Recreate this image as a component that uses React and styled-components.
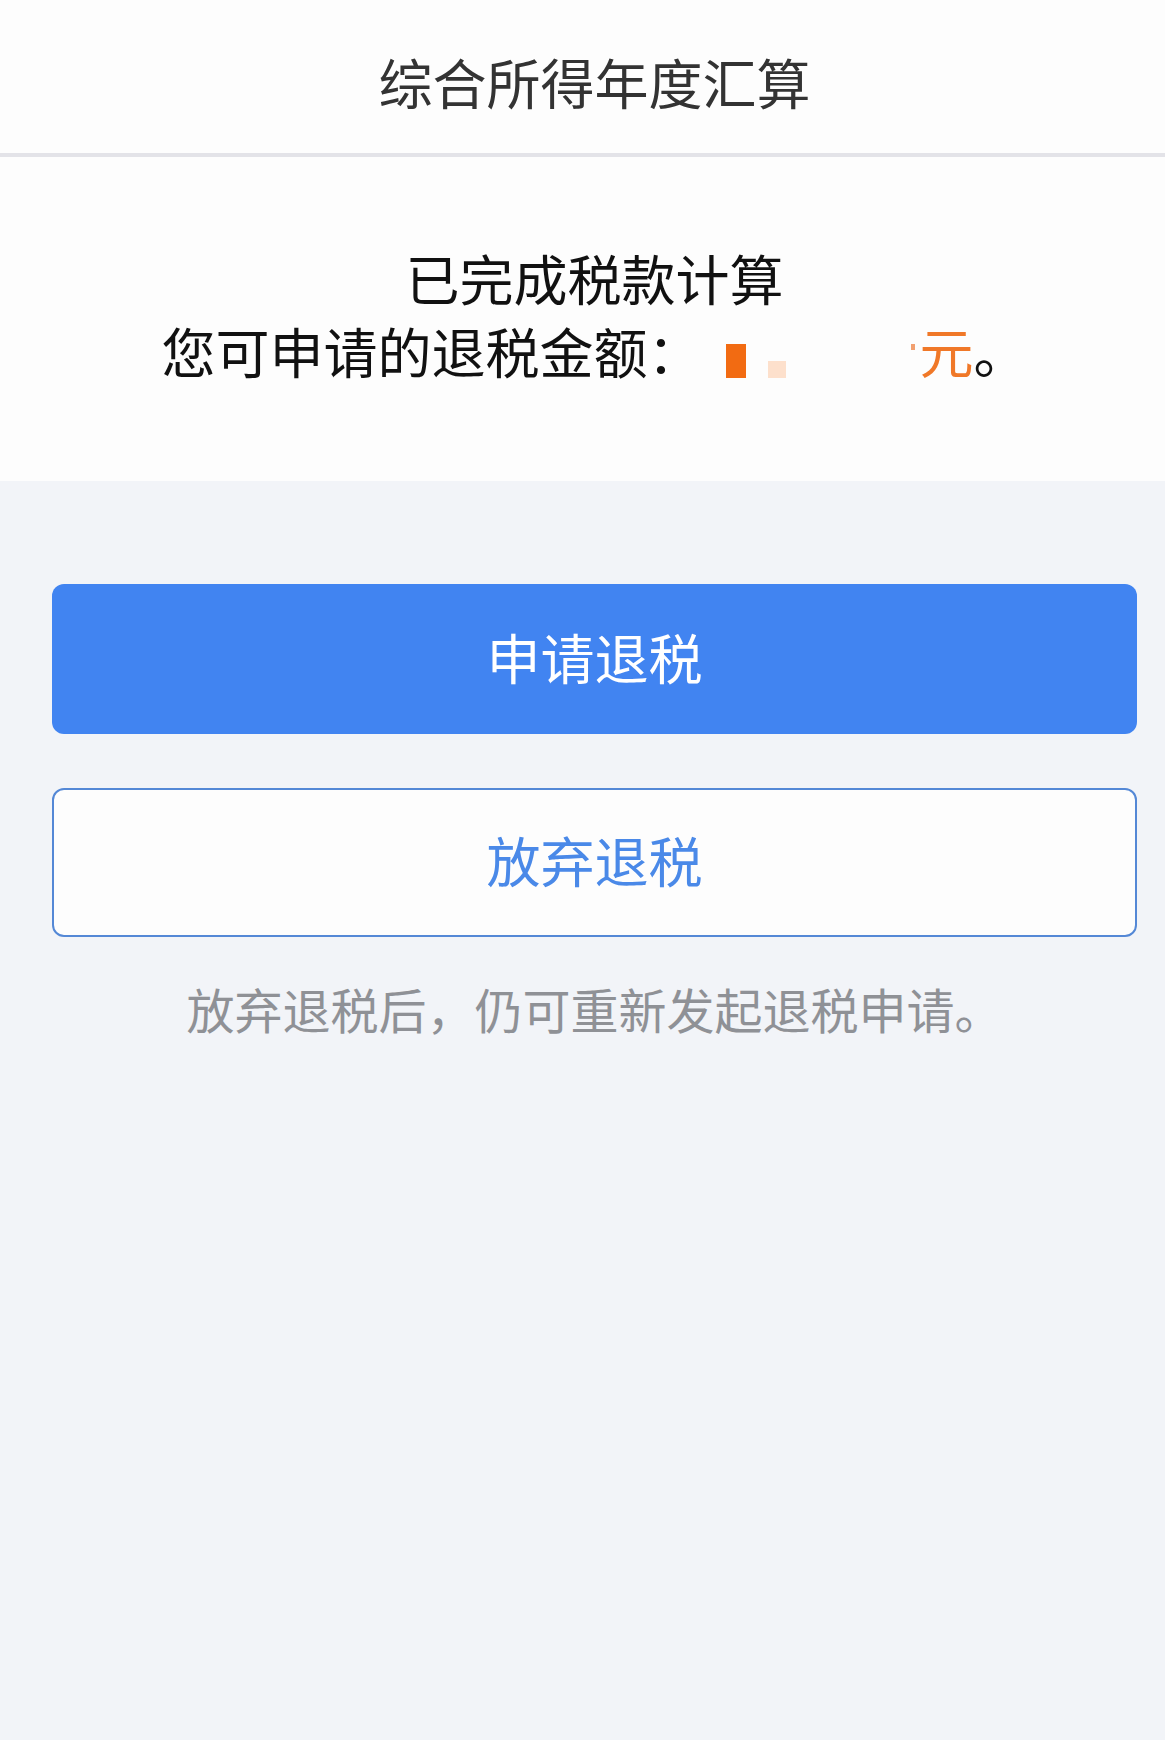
import React from "react";
import styled, { createGlobalStyle } from "styled-components";

const GlobalStyle = createGlobalStyle`
  html, body {
    margin: 0;
    padding: 0;
    background: #f2f4f8;
  }
  body {
    font-family: "Noto Sans CJK SC", "Noto Sans", sans-serif;
  }
`;

const Page = styled.div`
  min-height: 1740px;
  background: #f2f4f8;
`;

const Header = styled.header`
  height: 157px;
  box-sizing: border-box;
  padding: 10px 0 0 24px;
  display: flex;
  align-items: center;
  justify-content: center;
  background: #fdfdfd;
  border-bottom: 4px solid #e3e3e8;
`;

const Title = styled.h1`
  margin: 0;
  font-size: 54px;
  font-weight: 400;
  line-height: 1;
  color: #333333;
`;

const Summary = styled.section`
  background: #fdfdfd;
  padding: 84px 0 94px 24px;
  text-align: center;
`;

const Line = styled.p`
  margin: 0;
  font-size: 54px;
  line-height: 73px;
  color: #111111;
  white-space: nowrap;
`;

const Redacted = styled.span`
  display: inline-flex;
  align-items: flex-end;
  width: 218px;
  height: 40px;
  vertical-align: -4px;
`;

const Blot = styled.span`
  display: inline-block;
  width: ${(p) => p.w}px;
  height: ${(p) => p.h}px;
  margin-left: ${(p) => p.gap}px;
  margin-bottom: ${(p) => p.lift || 0}px;
  background: ${(p) => p.color};
`;

const Amount = styled.span`
  color: #f07828;
`;

const Actions = styled.section`
  padding: 103px 28px 0 52px;
  display: flex;
  flex-direction: column;
`;

const Button = styled.button`
  height: ${(p) => (p.primary ? 150 : 149)}px;
  margin-bottom: ${(p) => (p.primary ? 54 : 0)}px;
  padding: 0 0 6px;
  border-radius: 12px;
  border: ${(p) => (p.primary ? "none" : "2px solid #5488d6")};
  background: ${(p) => (p.primary ? "#4184f1" : "#fdfdfd")};
  color: ${(p) => (p.primary ? "#ffffff" : "#4a89e8")};
  font-family: "Noto Sans CJK SC", "Noto Sans", sans-serif;
  font-size: 54px;
  font-weight: 400;
  cursor: pointer;
`;

const Hint = styled.p`
  margin: 41px 0 0;
  font-size: 48px;
  line-height: 60px;
  text-align: center;
  color: #8f9196;
`;

const App = () => {
  return (
    <Page>
      <GlobalStyle />
      <Header>
        <Title>综合所得年度汇算</Title>
      </Header>
      <Summary>
        <Line>已完成税款计算</Line>
        <Line>
          您可申请的退税金额：
          <Redacted aria-label="金额">
            <Blot w={20} h={34} gap={24} color="#f26b12" />
            <Blot w={18} h={17} gap={22} color="#fde0cc" />
            <Blot w={4} h={6} gap={125} lift={28} color="#f2a070" />
          </Redacted>
          <Amount>元</Amount>。
        </Line>
      </Summary>
      <Actions>
        <Button primary>申请退税</Button>
        <Button>放弃退税</Button>
        <Hint>放弃退税后，仍可重新发起退税申请。</Hint>
      </Actions>
    </Page>
  );
};

export default App;
